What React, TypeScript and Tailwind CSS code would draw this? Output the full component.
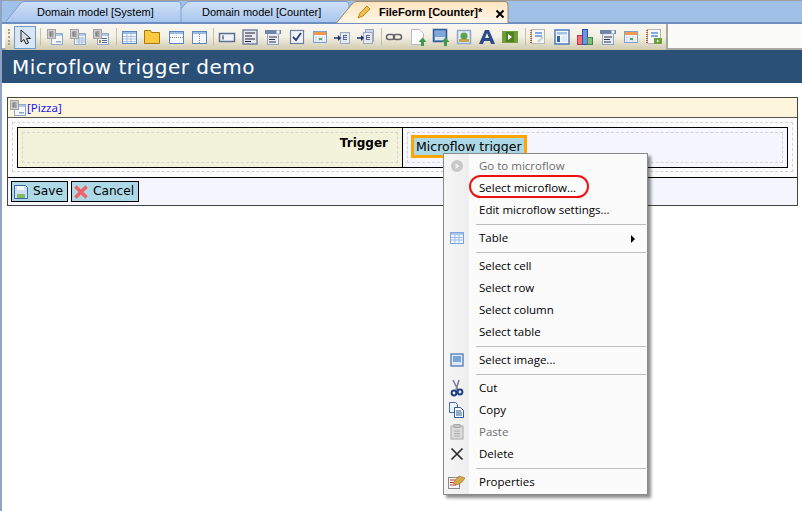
import type { ReactNode } from "react";

const ui = "font-['Open_Sans',sans-serif]";

function Svg({ children, w = 18, h = 18 }: { children: ReactNode; w?: number; h?: number }) {
  return (
    <svg width={w} height={h} viewBox={`0 0 ${w} ${h}`} className="block shrink-0">
      {children}
    </svg>
  );
}

// small window with a grey entity badge, used all over the toolbar and the form header
function EntityIcon({ variant = 0 }: { variant?: number }) {
  return (
    <Svg>
      <rect x="5.500" y="5.500" width="11" height="11" fill="#f4f7fc" stroke="#8ea6c8" />
      <rect x="6" y="6" width="10" height="2" fill="#b4c9e8" />
      {variant === 0 && <rect x="10" y="13" width="5" height="1.500" fill="#8ea6c8" />}
      {variant === 1 && <path d="M7 10h9M7 12h9M7 14h9M10 9v7M13 9v7" stroke="#a6bcdc" />}
      {variant === 2 && <path d="M10 10.500h5M10 12.500h5M10 14.500h5" stroke="#4a6a96" />}
      {variant === 2 && <rect x="7" y="12" width="2" height="3" fill="#b08a3c" />}
      <rect x="1.500" y="1.500" width="8" height="9" fill="#cfcfcf" stroke="#a4a4a4" />
      <path d="M3.500 3.500h4v1h-3v1h3v1h-3v1h3v1h-4z" fill="#6c6c6c" />
    </Svg>
  );
}

function Win({ children }: { children?: ReactNode }) {
  return (
    <Svg>
      <rect x="2.500" y="3.500" width="14" height="12" fill="#f5f8fd" stroke="#5f85bd" />
      <rect x="3" y="4" width="13" height="2" fill="#9dbbe4" />
      {children}
    </Svg>
  );
}

function ToolIcon({ name }: { name: string }) {
  switch (name) {
    case "cursor":
      return (
        <Svg>
          <path d="M5 2v12l3-2.500L10 16l2.500-1-2-4.500h4z" fill="#d5dde8" stroke="#222" strokeWidth="1" />
        </Svg>
      );
    case "e0":
      return <EntityIcon />;
    case "e1":
      return <EntityIcon variant={1} />;
    case "e2":
      return <EntityIcon variant={2} />;
    case "grid":
      return (
        <Win>
          <path d="M3 8.500h13M3 11h13M3 13.500h13M7 6v9M11 6v9" stroke="#a8c0e2" />
        </Win>
      );
    case "folder":
      return (
        <Svg>
          <path d="M1.500 15.500v-13h6l1 2h8v11z" fill="#fbc93d" stroke="#a87a10" />
        </Svg>
      );
    case "row":
      return (
        <Win>
          <path d="M3 9.500h13" stroke="#888" strokeDasharray="1 1" />
        </Win>
      );
    case "col":
      return (
        <Win>
          <path d="M9.500 6v9" stroke="#888" strokeDasharray="1 1" />
        </Win>
      );
    case "input":
      return (
        <Svg>
          <rect x="1.500" y="5.500" width="15" height="8" fill="#eef2fa" stroke="#5b6f90" strokeWidth="1.500" />
          <path d="M5 7.500v4" stroke="#222" />
        </Svg>
      );
    case "text":
      return (
        <Svg>
          <rect x="2" y="2" width="14" height="14" fill="#e6e8f6" stroke="#77839c" strokeWidth="1.500" />
          <path d="M4 5h10M4 8h7M4 11h10M4 13.500h6" stroke="#222" />
        </Svg>
      );
    case "drop":
      return (
        <Svg>
          <rect x="3.500" y="5.500" width="11" height="11" fill="#e6ecfa" stroke="#8fa3c4" />
          <rect x="1" y="2" width="16" height="4" fill="#6f86a8" />
          <rect x="12.500" y="2.500" width="3" height="3" fill="#fff" />
          <path d="M5 9h8M5 11.500h6M5 14h7" stroke="#333" />
        </Svg>
      );
    case "check":
      return (
        <Svg>
          <rect x="2.500" y="2.500" width="13" height="13" fill="#f1f3fb" stroke="#707f9c" strokeWidth="1.200" />
          <path d="M5 9l3 3 5-7" fill="none" stroke="#2c3f70" strokeWidth="1.800" />
        </Svg>
      );
    case "cal":
      return (
        <Svg>
          <rect x="2.500" y="3.500" width="13" height="11" fill="#f5f8fd" stroke="#7ea0d0" />
          <rect x="3" y="4" width="12" height="3" fill="#f2994a" />
          <path d="M4 9h10M4 11h10M4 13h10" stroke="#b7cbe6" strokeDasharray="2 1" />
          <rect x="8" y="10" width="3" height="2" fill="#57a85a" />
        </Svg>
      );
    case "ref":
    case "refset":
      return (
        <Svg>
          {name === "refset" && <rect x="8.500" y="1.500" width="8" height="12" fill="#ccd4e0" stroke="#9aa8c0" />}
          <rect x="6.500" y="4.500" width="9" height="11" fill="#e4e8f0" stroke="#9aa8c0" />
          <path d="M9 7h4v1h-3v1h3v1h-3v1h3v1H9z" fill="#5a6a88" />
          <path d="M0 10h5" stroke="#1d2f6f" strokeWidth="1.500" />
          <path d="M4 7l3 3-3 3z" fill="#1d2f6f" />
        </Svg>
      );
    case "link":
      return (
        <Svg>
          <rect x="1.500" y="6.500" width="8" height="5" rx="2.500" fill="none" stroke="#666" strokeWidth="1.500" />
          <rect x="8.500" y="6.500" width="8" height="5" rx="2.500" fill="none" stroke="#666" strokeWidth="1.500" />
        </Svg>
      );
    case "file":
      return (
        <Svg>
          <path d="M2.500 1.500h8l4 4v11h-12z" fill="#fdfdfd" stroke="#b9b9b9" />
          <path d="M12 18v-4H9.500l4-4.500 4 4.500H15v4z" fill="#3f9a4c" />
        </Svg>
      );
    case "img":
      return (
        <Svg>
          <rect x="1.500" y="1.500" width="13" height="12" fill="#7fa6d6" stroke="#2e5b97" strokeWidth="1.500" />
          <rect x="3" y="9" width="10" height="3" fill="#dbe6f4" />
          <path d="M12 18v-4H9.500l4-4.500 4 4.500H15v4z" fill="#3f9a4c" />
        </Svg>
      );
    case "tree":
      return (
        <Svg>
          <rect x="2.500" y="2.500" width="13" height="13" fill="#dfe9f6" stroke="#8fa8cc" strokeWidth="1.500" />
          <rect x="4" y="11" width="10" height="3" fill="#c9a64e" />
          <circle cx="9" cy="8" r="3.500" fill="#5fa04a" />
        </Svg>
      );
    case "label":
      return (
        <Svg>
          <path d="M1 16L7 2h4l6 14h-4l-1-3H6l-1 3zM7 10h4L9 5z" fill="#2c4a86" fillRule="evenodd" />
        </Svg>
      );
    case "play":
      return (
        <Svg>
          <rect x="1" y="3" width="16" height="12" fill="#6fa038" />
          <rect x="5" y="4" width="8" height="10" fill="#4e7f24" />
          <path d="M7 6l4 3-4 3z" fill="#fff" />
        </Svg>
      );
    case "book":
    case "bookplay":
      return (
        <Svg>
          <rect x="2.500" y="1.500" width="13" height="14" fill="#f8f8f8" stroke="#b6b6b6" />
          <path d="M2 2v13" stroke="#c2622d" strokeWidth="2" strokeDasharray="1 1" />
          <path d="M6 5h7M6 8h7" stroke="#5f8fd0" strokeWidth="1.500" />
          {name === "book" && <path d="M9 14l5-5" stroke="#ccc" strokeWidth="2" />}
          {name === "bookplay" && <rect x="9" y="10" width="8" height="6" fill="#6fa038" />}
          {name === "bookplay" && <path d="M12 11.500l2 1.500-2 1.500z" fill="#fff" />}
        </Svg>
      );
    case "layout":
      return (
        <Svg>
          <rect x="2" y="2" width="14" height="14" fill="#f5f8fd" stroke="#4f7cbc" strokeWidth="1.500" />
          <rect x="4" y="4" width="10" height="2.500" fill="#a9c2e6" />
          <rect x="4" y="8" width="3" height="6" fill="#2e64ac" />
          <rect x="8.500" y="8" width="5.500" height="6" fill="#dfe7f4" />
        </Svg>
      );
    case "chart":
      return (
        <Svg>
          <rect x="1.500" y="7.500" width="5" height="9" fill="#f0707c" stroke="#c03848" />
          <rect x="6.500" y="1.500" width="5" height="15" fill="#6f95e2" stroke="#2b50b0" />
          <rect x="11.500" y="9.500" width="5" height="7" fill="#82bc7e" stroke="#3c8a44" />
        </Svg>
      );
    default:
      return <Svg />;
  }
}

const toolGroups = [
  ["e0", "e1", "e2"],
  ["grid", "folder", "row", "col"],
  ["input", "text", "drop", "check", "cal", "ref", "refset"],
  ["link", "file", "img", "tree", "label", "play"],
  ["book", "layout", "chart", "drop", "cal", "bookplay"],
];

function Tab({ label, width, textLeft }: { label: string; width: number; textLeft: string }) {
  return (
    <div className="relative h-[21px] shrink-0" style={{ width }}>
      <svg width={width} height={21} viewBox={`0 0 ${width} 21`} className="absolute left-0 top-0">
        <defs>
          <linearGradient id="idle" x1="0" y1="0" x2="0" y2="1">
            <stop offset="0" stopColor="#cfe1f7" />
            <stop offset="1" stopColor="#a9c6ee" />
          </linearGradient>
        </defs>
        <path
          d={`M0.500 21L15 3Q17 0.500 20 0.500H${width - 4}Q${width - 1} 0.500 ${width - 1} 4V21`}
          fill="url(#idle)"
          stroke="#7f9fd0"
        />
      </svg>
      <span
        className={`absolute top-[3px] text-[11px] leading-[16px] text-black font-['Liberation_Sans',sans-serif] whitespace-nowrap ${textLeft}`}
      >
        {label}
      </span>
    </div>
  );
}

function MenuIcon({ name }: { name?: string }) {
  if (name === "go")
    return (
      <Svg w={14} h={14}>
        <circle cx="7" cy="7" r="6" fill="#c8c8c8" />
        <path d="M5.500 4l4 3-4 3z" fill="#eee" />
      </Svg>
    );
  if (name === "table")
    return (
      <Svg w={14} h={12}>
        <rect x="0.500" y="0.500" width="13" height="11" fill="#eef4fc" stroke="#7ea6dc" />
        <rect x="1" y="1" width="12" height="2" fill="#a9c6ec" />
        <path d="M1 5.500h12M1 8h12M5 3v8M9 3v8" stroke="#9fbde6" />
      </Svg>
    );
  if (name === "image")
    return (
      <Svg w={14} h={14}>
        <rect x="1" y="1" width="12" height="12" fill="#dfe9f6" stroke="#3f70b0" strokeWidth="1.200" />
        <rect x="3" y="3" width="8" height="6" fill="#7aa5dc" />
      </Svg>
    );
  if (name === "cut")
    return (
      <Svg w={14} h={18}>
        <path d="M3 1l5 10M9 1L6 11" stroke="#7d828e" strokeWidth="1.600" />
        <circle cx="4" cy="14" r="2.400" fill="none" stroke="#1d3f8a" strokeWidth="2" />
        <circle cx="10" cy="13" r="2.400" fill="none" stroke="#1d3f8a" strokeWidth="2" />
      </Svg>
    );
  if (name === "copy")
    return (
      <Svg w={16} h={16}>
        <path d="M0.500 0.500h6l2 2v8h-8z" fill="#eef3fb" stroke="#3f6fb0" />
        <path d="M5.500 5.500h6l3 3v7h-9z" fill="#f8fafd" stroke="#2f5a9c" />
        <path d="M7 9h5M7 11h6M7 13h6" stroke="#2f5a9c" />
      </Svg>
    );
  if (name === "paste")
    return (
      <Svg w={14} h={16}>
        <rect x="1" y="2" width="12" height="13" fill="#dcdcdc" stroke="#a8a8a8" />
        <rect x="4" y="0.500" width="6" height="3" fill="#c4c4c4" stroke="#a8a8a8" />
        <path d="M4 7h6M4 9.500h6M4 12h6" stroke="#a8a8a8" />
      </Svg>
    );
  if (name === "delete")
    return (
      <Svg w={14} h={14}>
        <path d="M1.500 1.500l11 11M12.500 1.500l-11 11" stroke="#2b2b2b" strokeWidth="1.700" />
      </Svg>
    );
  if (name === "props")
    return (
      <Svg w={18} h={16}>
        <rect x="0.500" y="3.500" width="11" height="11" fill="#f6f6f6" stroke="#8a8a8a" />
        <path d="M2 6h6M2 8.500h6M2 11h6" stroke="#c0392b" />
        <path d="M5 9l6-7 6 2-3 4-5 3z" fill="#d8a848" stroke="#8f6a20" strokeWidth="0.600" />
      </Svg>
    );
  return null;
}

type MenuEntry = { label?: string; icon?: string; disabled?: boolean; sub?: boolean };

const menu: MenuEntry[] = [
  { label: "Go to microflow", icon: "go", disabled: true },
  { label: "Select microflow..." },
  { label: "Edit microflow settings..." },
  {},
  { label: "Table", icon: "table", sub: true },
  {},
  { label: "Select cell" },
  { label: "Select row" },
  { label: "Select column" },
  { label: "Select table" },
  {},
  { label: "Select image...", icon: "image" },
  {},
  { label: "Cut", icon: "cut" },
  { label: "Copy", icon: "copy" },
  { label: "Paste", icon: "paste", disabled: true },
  { label: "Delete", icon: "delete" },
  {},
  { label: "Properties", icon: "props" },
];

function ContextMenu() {
  return (
    <div
      className={`absolute left-[441px] top-[153px] w-[205px] h-[342px] py-[1px] border border-[#8a8a8a] bg-[#fbfbfb] shadow-[3px_3px_3px_rgba(0,0,0,0.45)] ${ui} text-[11.500px] text-black`}
    >
      <div className="absolute left-0 top-0 bottom-0 w-[25px] bg-gradient-to-r from-[#f6f6f6] to-[#eeeeee]" />
      {menu.map((m, i) =>
        m.label ? (
          <div key={i} className="relative flex items-center h-[22px]">
            <div className="w-[25px] shrink-0 flex items-center justify-center">
              <MenuIcon name={m.icon} />
            </div>
            <span className={`ml-[10px] ${m.disabled ? "text-[#6d6d6d]" : ""}`}>{m.label}</span>
            {m.sub && (
              <span className="absolute right-[12px] top-[8px] w-0 h-0 border-y-[4px] border-y-transparent border-l-[4px] border-l-black" />
            )}
          </div>
        ) : (
          <div key={i} className="relative h-[6px] flex items-center pl-[32px] pr-[1px]">
            <div className="h-[1px] w-full bg-[#bdbdbd]" />
          </div>
        ),
      )}
      <div className="absolute left-[25px] top-[21px] w-[120px] h-[23px] rounded-[12px] border-2 border-[#ee1111]" />
    </div>
  );
}

function FormButton({ label, icon }: { label: string; icon: ReactNode }) {
  return (
    <div className="h-[21px] flex items-center gap-[4px] pl-[1px] pr-[4px] bg-[#add8e6] border border-black text-[12.200px] text-black">
      {icon}
      <span>{label}</span>
    </div>
  );
}

export default function App() {
  return (
    <div className="relative w-[802px] h-[511px] overflow-hidden bg-white border-l-2 border-[#8fa3c4] font-['DejaVu_Sans',sans-serif]">
      {/* Tab strip */}
      <div className="h-[24px] flex items-end pl-[3px] bg-[#a0c0e8] border-t-[1px] border-[#a0a0a0] border-b-2 border-b-[#6e8dc0]">
        <div className="relative z-10">
          <Tab label="Domain model [System]" width={177} textLeft="left-[32px]" />
        </div>
        <div className="relative -ml-[12px]">
          <Tab label="Domain model [Counter]" width={180} textLeft="left-[32px]" />
        </div>
        <div className="relative z-10 w-[173px] h-[22px] -ml-[14px] -mb-[1px] shrink-0">
          <svg width={173} height={22} viewBox="0 0 173 22" className="absolute left-0 top-0">
            <defs>
              <linearGradient id="active" x1="0" y1="0" x2="0" y2="1">
                <stop offset="0" stopColor="#fde3c0" />
                <stop offset="1" stopColor="#fff6e8" />
              </linearGradient>
            </defs>
            <path d="M0.500 22L16 3Q18 0.500 21 0.500H169Q172 0.500 172 4V22" fill="url(#active)" stroke="#9a8a6a" />
          </svg>
          <svg width={14} height={14} viewBox="0 0 14 14" className="absolute left-[21px] top-[4px]">
            <path d="M1 13l2-5 7-7 3 3-7 7z" fill="#f3c14b" stroke="#b98a20" />
          </svg>
          <span className="absolute left-[43px] top-[3px] text-[11px] leading-[16px] font-bold text-black font-['Liberation_Sans',sans-serif] whitespace-nowrap">
            FileForm [Counter]*
          </span>
          <svg width={10} height={10} viewBox="0 0 10 10" className="absolute left-[159px] top-[8px]">
            <path d="M1.500 1.500l7 7M8.500 1.500l-7 7" stroke="#000" strokeWidth="2" />
          </svg>
        </div>
      </div>

      {/* Toolbar */}
      <div className="h-[26px] bg-[#fbfbf9] border-b-2 border-[#a8a8a0]">
        <div className="ml-[3px] w-[663px] h-[26px] flex items-center pl-[3px] bg-gradient-to-b from-[#f9f7f1] via-[#f3f0e4] to-[#cfcaae] border-r-2 border-[#a8a8a0] rounded-bl-[3px]">
          <div className="w-[3px] h-[16px] mr-[3px] border-l-2 border-dotted border-[#a8a490]" />
          <div className="w-[23px] h-[23px] flex items-center justify-center bg-[#d8e6f6] border border-[#6e9ad0]">
            <ToolIcon name="cursor" />
          </div>
          <div className="w-[1px] h-[18px] ml-[4px] mr-[2px] bg-[#c4c0ac]" />
          {toolGroups.map((group, i) => (
            <div key={i} className="flex items-center">
              {group.map((name, j) => (
                <div key={j} className="w-[23.200px] flex justify-center">
                  <ToolIcon name={name} />
                </div>
              ))}
              {i < toolGroups.length - 1 && <div className="w-[1px] h-[18px] ml-[3px] mr-[1px] bg-[#c4c0ac]" />}
            </div>
          ))}
        </div>
      </div>

      {/* Title */}
      <div className="h-[33px] px-[10px] bg-[#2a5078] text-white text-[20px] leading-[34px] tracking-[0.5px]">
        Microflow trigger demo
      </div>

      {/* Form */}
      <div className="mt-[14px] ml-[5px] w-[791px] border border-[#444]">
        <div className="h-[20px] flex items-center gap-[0px] px-[1px] bg-[#fdf6dc] border-b border-[#555] text-[11.500px] text-[#1a1aee] font-['Noto_Sans',sans-serif]">
          <ToolIcon name="e0" />
          <span>[Pizza]</span>
        </div>
        <div className="h-[59px] p-[4px] bg-[#fbfbfb]">
          <div className="h-[50px] pt-[4px] px-[4px] border border-dashed border-[#d4d4d4]">
            <div className="h-[41px] flex border border-black">
              <div className="w-[385px] p-[4px] bg-[#f3f3dc] border-r border-black">
                <div className="h-full flex items-start justify-end pr-[9px] pt-[1px] border border-dashed border-[#d4d4d4] text-[12px] font-bold text-black">
                  Trigger
                </div>
              </div>
              <div className="flex-1 p-[4px] bg-[#f5f6ff]">
                <div className="h-full pl-[3px] border border-dashed border-[#d4d4d4]">
                  <span className="block w-[116px] h-[23px] mt-[2px] px-[2px] bg-[#add8e6] border-[3px] border-[#ffa500] text-[12.500px] leading-[18px] text-black whitespace-nowrap">
                    Microflow trigger
                  </span>
                </div>
              </div>
            </div>
          </div>
        </div>
        <div className="h-[28px] flex items-center gap-[3px] pl-[3px] bg-[#f4f5fd] border-t border-black">
          <FormButton
            label="Save"
            icon={
              <Svg w={16} h={16}>
                <path d="M1.500 1.500h11l2 2v11h-13z" fill="#cfe0f4" stroke="#3a69a8" />
                <rect x="4" y="2" width="7" height="4" fill="#f4f8fc" />
                <rect x="4" y="10" width="8" height="4" fill="#7dbb62" />
              </Svg>
            }
          />
          <FormButton
            label="Cancel"
            icon={
              <Svg w={16} h={16}>
                <path d="M2.500 2.500l11 11M13.500 2.500l-11 11" stroke="#f2606a" strokeWidth="3.500" />
              </Svg>
            }
          />
        </div>
      </div>

      <ContextMenu />
    </div>
  );
}
